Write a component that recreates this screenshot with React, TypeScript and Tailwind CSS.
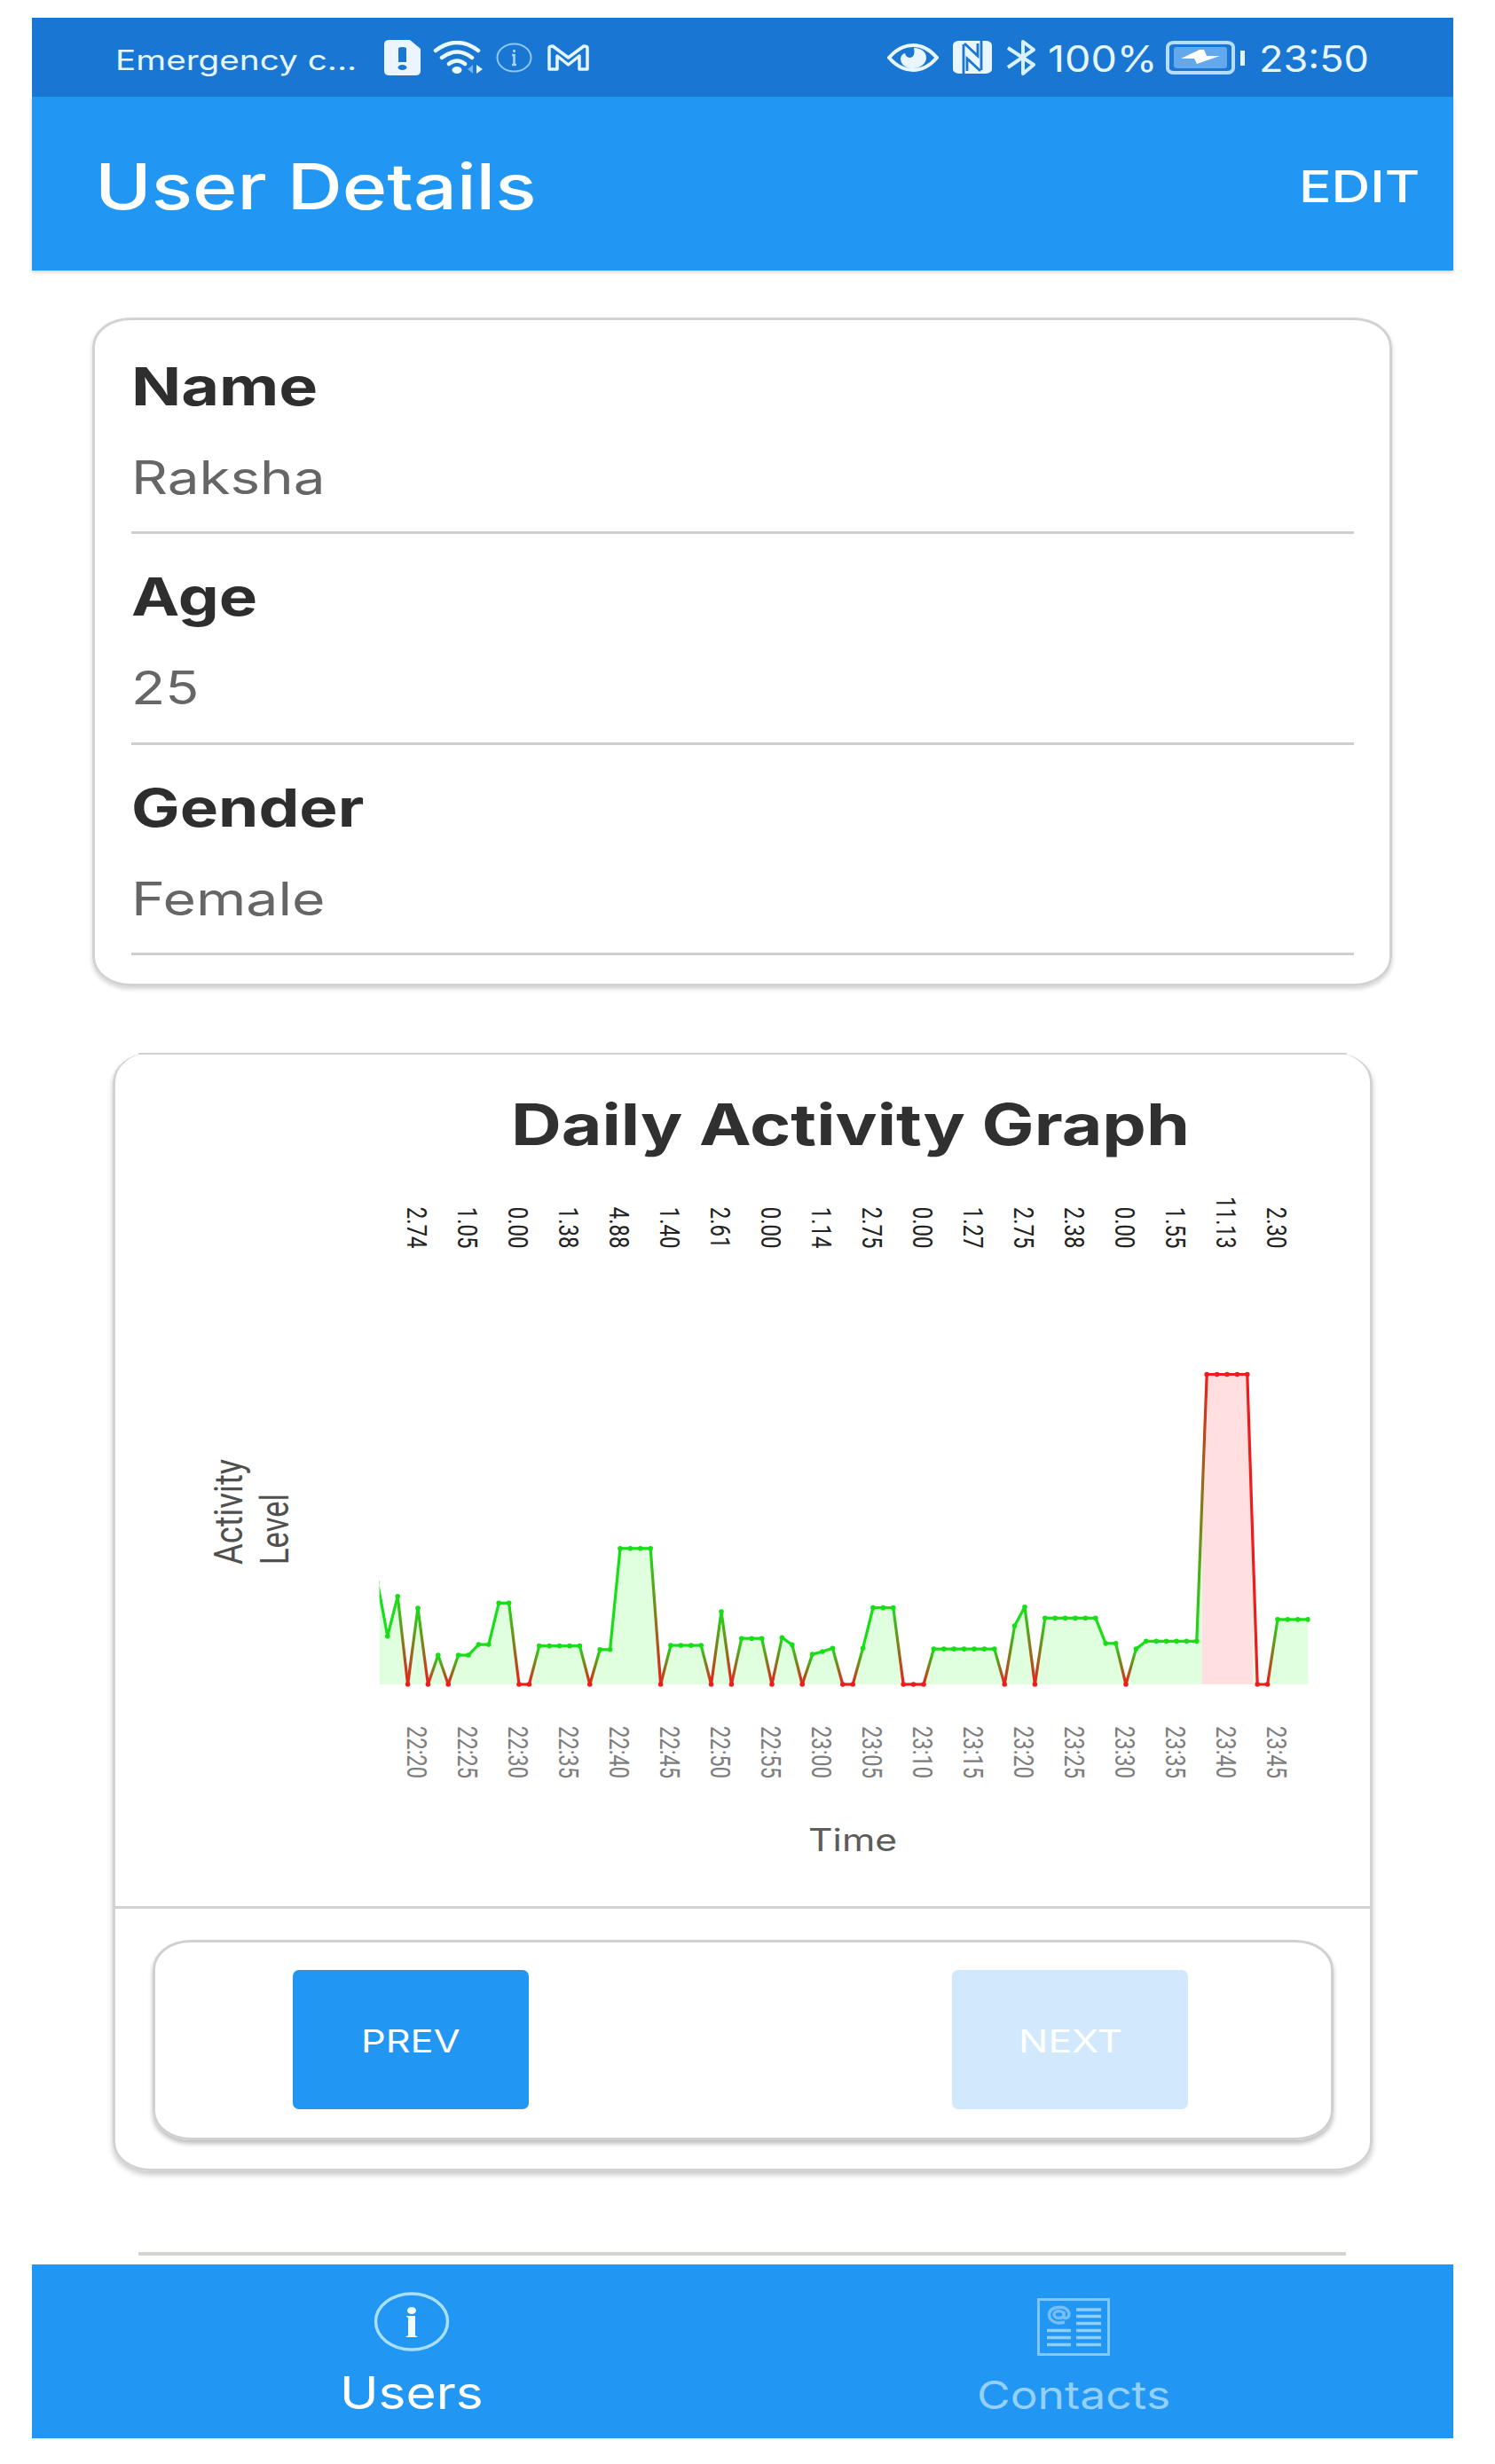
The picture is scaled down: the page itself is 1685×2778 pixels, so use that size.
import { useLayoutEffect, useRef, useState } from "react";

interface StretchTextProps {
  text: string;
  className: string;
}

// single line of text, scaled horizontally until it fills its box
const StretchText = ({ text, className }: StretchTextProps) => {
  const box = useRef<HTMLDivElement>(null);
  const inner = useRef<HTMLSpanElement>(null);
  const [scale, setScale] = useState<number>(1);

  useLayoutEffect(() => {
    if (box.current && inner.current) {
      setScale(box.current.offsetWidth / inner.current.offsetWidth);
    }
  }, [text]);

  return (
    <div
      ref={box}
      className={`shrink-0 leading-none text-left ${className}`}
    >
      <span
        ref={inner}
        className="inline-block whitespace-nowrap origin-left leading-none align-top"
        style={{ transform: `scaleX(${scale})` }}
      >
        {text}
      </span>
    </div>
  );
};

const SimIcon = () => (
  <svg viewBox="0 0 41 40" className="w-[41px] h-[40px] ml-[31px] shrink-0">
    <path
      d="M6 0H29L41 10V35Q41 40 35 40H6Q0 40 0 35V5Q0 0 6 0Z"
      fill="#eaf5ff"
    />
    <path d="M16 9Q20.500 7 25 9V25H16z" fill="#1976d2" />
    <ellipse cx="20.500" cy="31" rx="5" ry="3" fill="#1976d2" />
  </svg>
);

const WifiIcon = () => (
  <svg viewBox="0 0 57 38" className="w-[57px] h-[38px] ml-[14px] shrink-0">
    <g fill="none" stroke="#eaf8ff" strokeWidth="4.500" strokeLinecap="round">
      <path d="M3 11Q27 -7 51 11" />
      <path d="M10 19Q27 6 44 19" />
      <path d="M18 26Q27 19 36 26" />
    </g>
    <ellipse cx="27" cy="33" rx="5.500" ry="4" fill="#eaf8ff" />
    <path d="M45 27v10l-6-5z" fill="#6fb5f2" />
    <path d="M49 27v10l7-5z" fill="#eaf8ff" />
  </svg>
);

const SmallInfoIcon = () => (
  <svg viewBox="0 0 41 34" className="w-[41px] h-[34px] ml-[14px] shrink-0">
    <ellipse
      cx="20.500"
      cy="17"
      rx="19"
      ry="15.500"
      fill="none"
      stroke="#8fc8f8"
      strokeWidth="2"
    />
    <path
      d="M20.500 8v3M18 14h2.500v11M18 25h5"
      fill="none"
      stroke="#a8d6fb"
      strokeWidth="2.500"
    />
  </svg>
);

const MailIcon = () => (
  <svg viewBox="0 0 47 30" className="w-[47px] h-[30px] ml-[17px] shrink-0">
    <path
      d="M2 28V4Q2 2 6 2L23.500 15L41 2Q45 2 45 4V28H36V13L23.500 23L11 13V28Z"
      fill="none"
      stroke="#e4f6ff"
      strokeWidth="3.500"
      strokeLinejoin="round"
    />
  </svg>
);

const EyeIcon = () => (
  <svg viewBox="0 0 58 32" className="w-[58px] h-[32px] shrink-0">
    <path
      d="M2 16Q14 2 29 2T56 16Q44 30 29 30T2 16Z"
      fill="none"
      stroke="#e8f7ff"
      strokeWidth="4"
    />
    <path
      d="M30 5C39 5 44 10 44 16S38 28 29 28S15 23 15 17Q16 12 20 11Q21 16 26 16Q32 15 30 5Z"
      fill="#e8f7ff"
    />
  </svg>
);

const NfcIcon = () => (
  <svg viewBox="0 0 44 37" className="w-[44px] h-[37px] ml-[16px] shrink-0">
    <rect width="44" height="37" rx="7" ry="5" fill="#e8f7ff" />
    <g fill="none" stroke="#1976d2" strokeWidth="2.800">
      <path d="M12 37V4" />
      <path d="M13 3L28 17V3" />
      <path d="M32 0V33" />
      <path d="M31 34L16 20V34" />
    </g>
  </svg>
);

const BluetoothIcon = () => (
  <svg viewBox="0 0 34 40" className="w-[34px] h-[40px] ml-[16px] shrink-0">
    <path
      d="M2 9L31 28L19 38V2L31 11L2 31"
      fill="none"
      stroke="#d8f3ff"
      strokeWidth="4"
      strokeLinejoin="round"
    />
  </svg>
);

const BatteryIcon = () => (
  <svg viewBox="0 0 90 38" className="w-[90px] h-[38px] ml-[9px] shrink-0">
    <rect
      x="2"
      y="2"
      width="74"
      height="34"
      rx="7"
      ry="5"
      fill="none"
      stroke="#b5dcfb"
      strokeWidth="4"
    />
    <rect x="9" y="7" width="60" height="24" rx="3" fill="#64a8ec" />
    <path d="M38 10L17 20H32L35 26L61 17H46L43 10Z" fill="#fff" />
    <rect x="84" y="11" width="5" height="17" fill="#dff4ff" />
  </svg>
);

const UsersIcon = () => (
  <svg viewBox="0 0 86 68" className="w-[86px] h-[68px]">
    <ellipse
      cx="43"
      cy="33.500"
      rx="40.500"
      ry="31.500"
      fill="none"
      stroke="#a9e0ff"
      strokeWidth="3.500"
    />
    <ellipse cx="43" cy="21" rx="5" ry="4" fill="#f2fcff" />
    <path d="M37 27H47V49L50 51H36L39 49V29L37 28Z" fill="#f2fcff" />
  </svg>
);

const ContactsIcon = () => (
  <svg viewBox="0 0 82 65" className="w-[82px] h-[65px]">
    <rect
      x="1.500"
      y="1.500"
      width="79"
      height="62"
      fill="none"
      stroke="#80c8fc"
      strokeWidth="3"
    />
    <g stroke="#8fcdfb" strokeWidth="3.500">
      <path d="M44 13H72M44 20.500H72M44 28.500H72M44 36.500H72M44 44.500H72M44 52.500H72" />
      <path d="M11 36.500H38M11 44.500H38M11 52.500H38" />
    </g>
    <g fill="none" stroke="#76befa" strokeWidth="3.500">
      <path d="M31 27Q20 30 14.500 23Q11 14 20 11Q33 8 36 17Q36 24 30 22V15" />
      <ellipse cx="24.500" cy="18.500" rx="5.500" ry="4" />
    </g>
  </svg>
);

const details = [
  { label: "Name", value: "Raksha", labelW: "w-[210px]", valueW: "w-[218px]" },
  { label: "Age", value: "25", labelW: "w-[142px]", valueW: "w-[76px]" },
  {
    label: "Gender",
    value: "Female",
    labelW: "w-[263px]",
    valueW: "w-[219px]",
  },
];

const topLabels = [
  "2.74", "1.05", "0.00", "1.38", "4.88", "1.40", "2.61", "0.00", "1.14",
  "2.75", "0.00", "1.27", "2.75", "2.38", "0.00", "1.55", "11.13", "2.30",
];

const timeLabels = [
  "22:20", "22:25", "22:30", "22:35", "22:40", "22:45", "22:50", "22:55",
  "23:00", "23:05", "23:10", "23:15", "23:20", "23:25", "23:30", "23:35",
  "23:40", "23:45",
];

// one reading per minute, the first one lies just left of the visible range
const readings = [
  3.67, 1.73, 3.16, 0, 2.74, 0, 1.05, 0, 1.05, 1.05, 1.43, 1.43, 2.92, 2.92, 0,
  0, 1.38, 1.38, 1.38, 1.38, 1.38, 0, 1.25, 1.25, 4.88, 4.88, 4.88, 4.88, 0,
  1.4, 1.4, 1.4, 1.4, 0, 2.61, 0, 1.65, 1.65, 1.65, 0, 1.68, 1.42, 0, 1.08,
  1.18, 1.3, 0, 0, 1.3, 2.75, 2.75, 2.75, 0, 0, 0, 1.27, 1.27, 1.27, 1.27,
  1.27, 1.27, 1.27, 0, 2.1, 2.78, 0, 2.38, 2.38, 2.38, 2.38, 2.38, 2.38, 1.47,
  1.47, 0, 1.27, 1.55, 1.55, 1.55, 1.55, 1.55, 1.55, 11.13, 11.13, 11.13,
  11.13, 11.13, 0, 0, 2.33, 2.33, 2.33, 2.33,
];

const STEP = 11.4;
const BASE = 559;
const UNIT = 31.4;
const LEFT = 295.6;
const RIGHT = 1344.5;
const GREEN = "#17de17";
const RED = "#ee1c1c";

const points = readings.map((v, i) => ({
  x: 293.4 + i * STEP,
  y: BASE - v * UNIT,
  color: v === 0 || v > 10 ? RED : GREEN,
}));

const area =
  `M${points[0].x} ${BASE} ` +
  points.map((p) => `L${p.x} ${p.y}`).join(" ") +
  ` L${points[points.length - 1].x} ${BASE} Z`;

const ActivityChart = () => (
  <svg
    viewBox="0 0 1413 700"
    className="w-[1413px] h-[700px] ml-[2px] mt-[40px] overflow-visible font-['Roboto',sans-serif]"
  >
    <defs>
      <clipPath id="low">
        <rect x={LEFT} y="0" width={1222.6 - LEFT} height={BASE + 1} />
        <rect x="1280.5" y="0" width={RIGHT - 1280.5} height={BASE + 1} />
      </clipPath>
      <clipPath id="high">
        <rect x="1222.6" y="0" width="57.9" height={BASE + 1} />
      </clipPath>
      <clipPath id="plot">
        <rect x={LEFT} y="0" width={RIGHT - LEFT} height="600" />
      </clipPath>
      {points.slice(1).map((p, i) => (
        <linearGradient
          key={i}
          id={`seg${i}`}
          gradientUnits="userSpaceOnUse"
          x1={points[i].x}
          y1={points[i].y}
          x2={p.x}
          y2={p.y}
        >
          <stop offset="0" stopColor={points[i].color} />
          <stop offset="1" stopColor={p.color} />
        </linearGradient>
      ))}
    </defs>

    <g fill="#505050">
      <text
        transform="translate(141 424) rotate(-90)"
        fontSize="44.5"
        textLength="119"
        lengthAdjust="spacingAndGlyphs"
      >
        Activity
      </text>
      <text
        transform="translate(193 424) rotate(-90)"
        fontSize="44.5"
        textLength="80"
        lengthAdjust="spacingAndGlyphs"
      >
        Level
      </text>
    </g>

    {topLabels.map((label, i) => (
      <text
        key={i}
        transform={`translate(${326.5 + i * 57} 67.5) rotate(90)`}
        fontSize="32"
        textAnchor="end"
        textLength={label.length * 11.7}
        lengthAdjust="spacingAndGlyphs"
        fill="#222"
      >
        {label}
      </text>
    ))}

    <path d={area} fill="#dfffdf" clipPath="url(#low)" />
    <path d={area} fill="#ffdfdf" clipPath="url(#high)" />

    <g clipPath="url(#plot)">
      {points.slice(1).map((p, i) => (
        <line
          key={i}
          x1={points[i].x}
          y1={points[i].y}
          x2={p.x}
          y2={p.y}
          stroke={points[i].color === p.color ? p.color : `url(#seg${i})`}
          strokeWidth="3.200"
        />
      ))}
      {points.map((p, i) => (
        <circle key={i} cx={p.x} cy={p.y} r="2.800" fill={p.color} />
      ))}
    </g>

    {timeLabels.map((label, i) => (
      <text
        key={i}
        transform={`translate(${326.5 + i * 57} 606) rotate(90)`}
        fontSize="32"
        textLength="59"
        lengthAdjust="spacingAndGlyphs"
        fill="#7d7d7d"
      >
        {label}
      </text>
    ))}
  </svg>
);

const StatusBar = () => (
  <div className="flex items-center h-[89px] pl-[94px] pr-[95px] bg-[#1976d2] text-[#e6f6ff]">
    <StretchText
      text="Emergency c..."
      className="w-[272px] text-[31px] pt-[5px]"
    />
    <SimIcon />
    <WifiIcon />
    <SmallInfoIcon />
    <MailIcon />
    <div className="flex items-center ml-auto">
      <EyeIcon />
      <NfcIcon />
      <BluetoothIcon />
      <StretchText
        text="100%"
        className="w-[124px] text-[41px] ml-[13px] pt-[4px]"
      />
      <BatteryIcon />
      <StretchText
        text="23:50"
        className="w-[124px] text-[41px] ml-[15px] pt-[4px]"
      />
    </div>
  </div>
);

const AppBar = () => (
  <div className="flex items-center justify-between h-[196px] pl-[71px] pr-[37px] bg-[#2196f3] text-white shadow-[0_2px_4px_rgba(0,0,0,0.18)]">
    <StretchText
      text="User Details"
      className="w-[498px] text-[71px] font-medium pt-[7px]"
    />
    <StretchText
      text="EDIT"
      className="w-[137px] text-[50px] font-medium pt-[5px]"
    />
  </div>
);

const UserCard = () => (
  <div className="w-[1465px] h-[754px] ml-[68px] mt-[53px] pt-[4px] pl-[41px] pr-[40px] rounded-[43px_/_33px] border-[3px] border-[#d2d2d2] shadow-[0_3px_5px_rgba(0,0,0,0.18)]">
    {details.map((row) => (
      <div
        key={row.label}
        className="h-[237.300px] pt-[41px] border-b-[3px] border-[#cfcfcf]"
      >
        <StretchText
          text={row.label}
          className={`${row.labelW} text-[59px] font-bold text-[#2e2e2e]`}
        />
        <StretchText
          text={row.value}
          className={`${row.valueW} text-[52px] mt-[48px] text-[#666]`}
        />
      </div>
    ))}
  </div>
);

const GraphCard = () => (
  <div className="w-[1420px] h-[1261px] ml-[91px] mt-[75px] rounded-[43px_/_33px] border-[3px] border-t-0 border-[#d2d2d2] shadow-[0_4px_6px_rgba(0,0,0,0.22)]">
    <div className="h-[2px] mx-[26px] bg-[#d2d2d2]" />
    <StretchText
      text="Daily Activity Graph"
      className="w-[765px] text-[64px] font-bold ml-[446px] mt-[47px] text-[#303030]"
    />
    <ActivityChart />
    <StretchText
      text="Time"
      className="w-[100px] text-[35px] ml-[781px] mt-[17px] text-[#5c5c5c]"
    />
    <div className="h-[3px] mt-[57px] bg-[#d2d2d2]" />
    <div className="flex items-start gap-[477px] w-[1331px] h-[226px] ml-[42px] mt-[35px] pt-[31px] pl-[155px] rounded-[43px_/_33px] border-[3px] border-[#d0d0d0] shadow-[0_4px_5px_rgba(0,0,0,0.25)]">
      <button className="flex items-center justify-center w-[266px] h-[157px] pt-[2px] rounded-[7px] bg-[#2196f3] text-white">
        <StretchText text="PREV" className="w-[112px] text-[36px]" />
      </button>
      <button className="flex items-center justify-center w-[266px] h-[157px] pt-[2px] rounded-[7px] bg-[#d2e9fd] text-white">
        <StretchText text="NEXT" className="w-[117px] text-[36px]" />
      </button>
    </div>
  </div>
);

const TabBar = () => (
  <div className="flex h-[196px] bg-[#2196f3]">
    <div className="flex flex-col items-center w-[855px] pt-[31px]">
      <UsersIcon />
      <StretchText
        text="Users"
        className="w-[162px] text-[51px] mt-[20px] text-white"
      />
    </div>
    <div className="flex flex-col items-center w-[638px] pt-[38px]">
      <ContactsIcon />
      <StretchText
        text="Contacts"
        className="w-[218px] text-[44px] mt-[22px] text-[#93d0fb]"
      />
    </div>
  </div>
);

export default function App() {
  return (
    <div className="w-[1685px] h-[2778px] pt-[20px] pl-[36px] overflow-hidden bg-white font-['Inter',sans-serif]">
      <div className="w-[1602px]">
        <StatusBar />
        <AppBar />
        <div className="flex flex-col h-[2248px] overflow-hidden">
          <UserCard />
          <GraphCard />
          <div className="h-[4px] w-[1361px] ml-[120px] mt-[91px] bg-[#d3d3cf]" />
        </div>
        <TabBar />
      </div>
    </div>
  );
}
